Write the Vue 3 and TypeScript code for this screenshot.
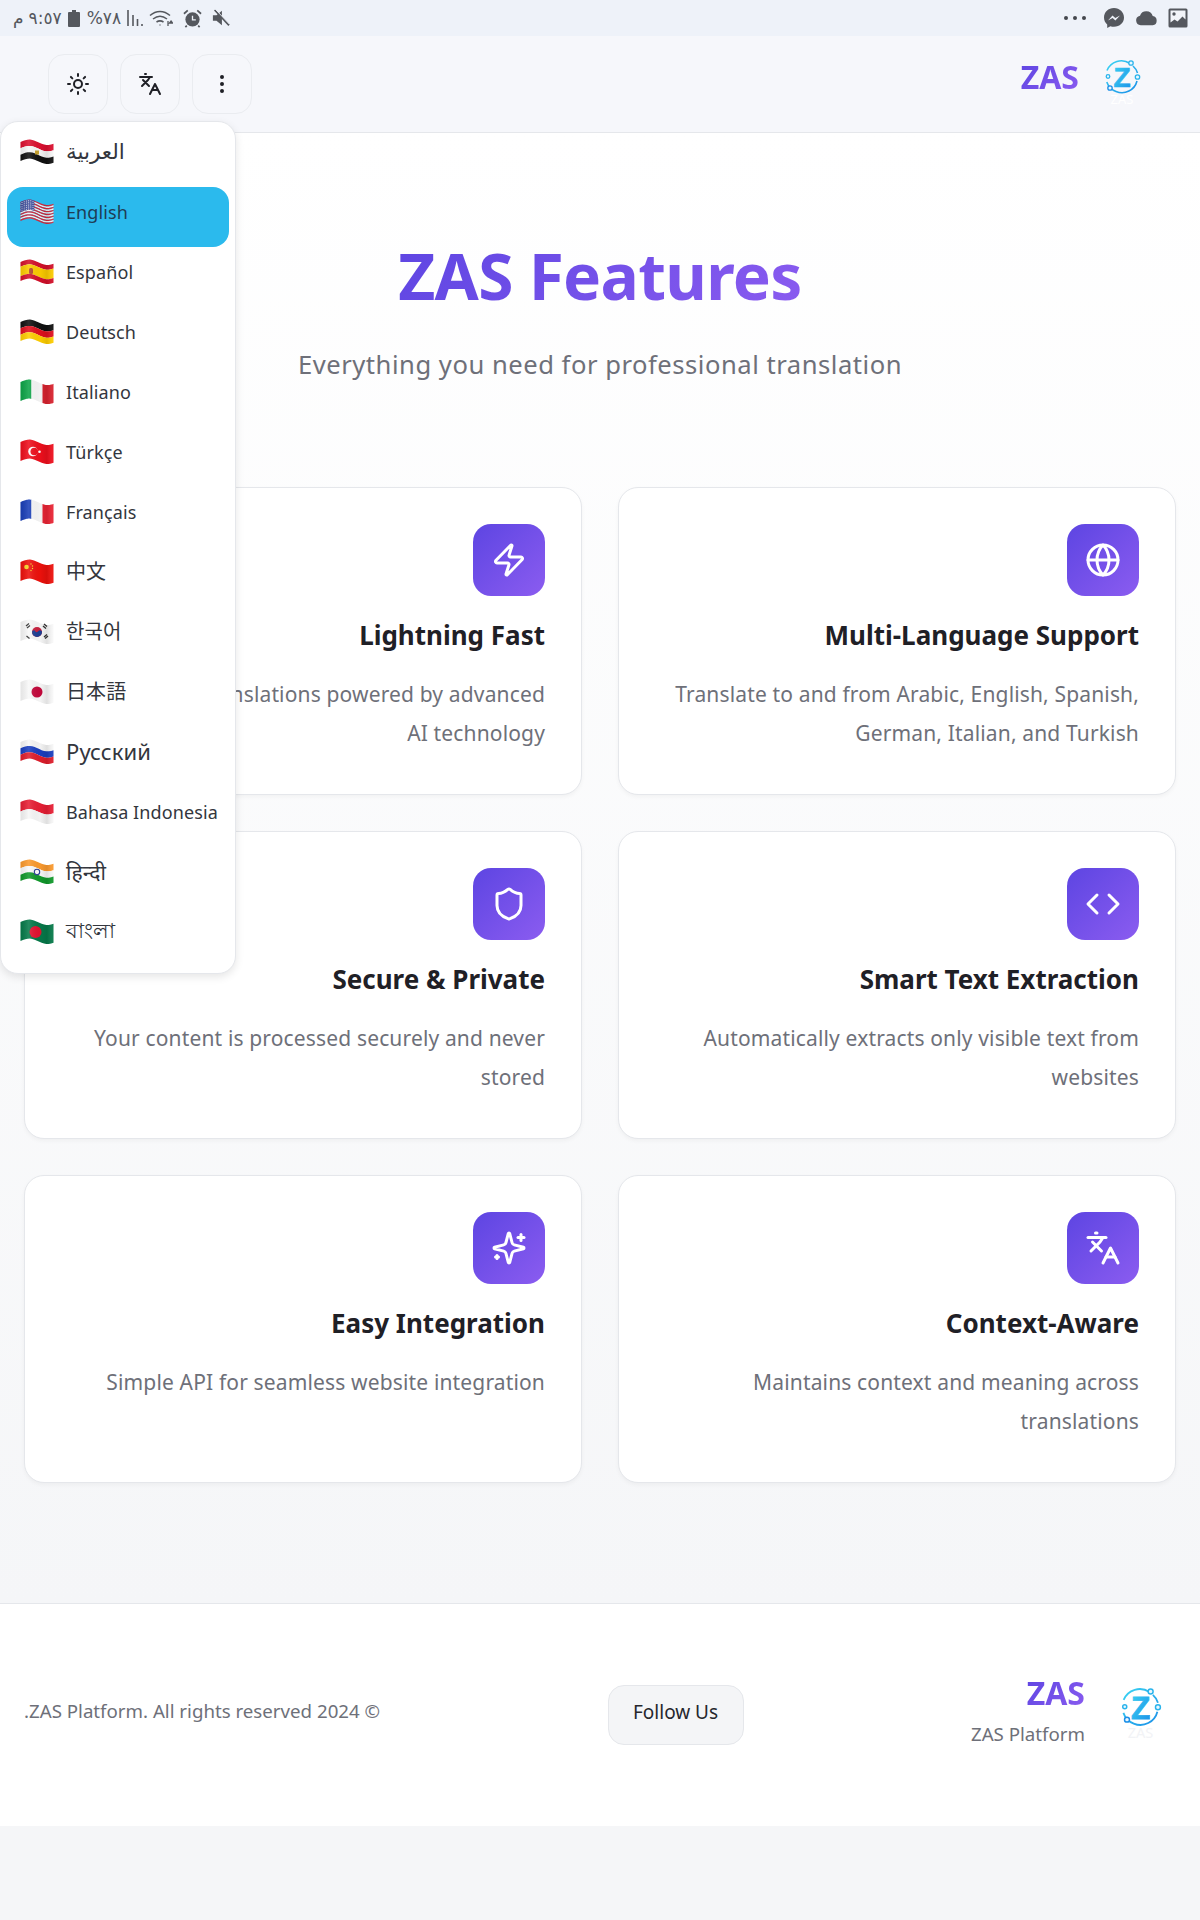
<template>
  <div class="page">
    <div class="status">
      <div class="status-left">
        <span class="st-txt st-m">م</span>
        <span class="st-txt st-time" dir="ltr">٩:٥٧</span>
        <svg class="st-batt" viewBox="0 0 12 17" width="12" height="17"><path d="M4 0h4v2h3a1 1 0 0 1 1 1v13a1 1 0 0 1-1 1H1a1 1 0 0 1-1-1V3a1 1 0 0 1 1-1h3z" fill="#55585e" /></svg>
        <span class="st-txt st-pct" dir="ltr">%٧٨</span>
        <svg class="st-sig" viewBox="0 0 18 18" width="18" height="18"><path d="M1 1v16M6 6v11M10.500 10v7M15 15v2" stroke="#55585e" stroke-width="1.600" fill="none" /></svg>
        <svg class="st-wifi" viewBox="0 0 24 18" width="24" height="18">
          <path d="M1 6.500C7 1 15 1 21 6.500M4 10c4.500-3.500 9.500-3.500 14 0M7.500 13c2.500-1.600 4.500-1.600 7 0" stroke="#55585e" stroke-width="1.500" fill="none" />
          <path d="M11 15.500v1M19 12v5M22 12l1.500 2h-3z" stroke="#55585e" stroke-width="1.300" fill="none" />
        </svg>
        <svg class="st-alarm" viewBox="0 0 20 20" width="19" height="19">
          <circle cx="10" cy="11" r="7.500" fill="#55585e" />
          <path d="M10 7v4.500h3.500" stroke="#eef2f9" stroke-width="1.400" fill="none" />
          <path d="M1 5l4-3.500M19 5l-4-3.500M4 17.500l-1.500 1.500M16 17.500l1.500 1.500" stroke="#55585e" stroke-width="1.800" fill="none" />
        </svg>
        <svg class="st-mute" viewBox="0 0 20 20" width="18" height="18">
          <path d="M1 7h4l6-5v16l-6-5H1z" fill="#55585e" />
          <path d="M3 1l16 17" stroke="#55585e" stroke-width="2.200" />
          <path d="M3.500 0l16 17" stroke="#eef2f9" stroke-width="1" />
        </svg>
      </div>
      <div class="status-right">
        <span class="st-dots"><i /><i /><i /></span>
        <svg viewBox="0 0 22 22" width="22" height="22">
          <path d="M11 1C5.300 1 1 5.100 1 10.500c0 2.900 1.200 5.300 3.200 7v3.500l3.200-1.800c1.100.4 2.300.6 3.600.6 5.700 0 10-4.100 10-9.300S16.700 1 11 1z" fill="#55585e" />
          <path d="M5 13.500l4.500-5 2.800 2.500 4.700-2.500-4.600 5-2.800-2.500z" fill="#eef2f9" />
        </svg>
        <svg viewBox="0 0 24 16" width="23" height="16"><path d="M6 15.500a5 5 0 0 1-.8-9.900A7 7 0 0 1 18.500 6a4.800 4.800 0 0 1 0 9.500z" fill="#55585e" /></svg>
        <svg viewBox="0 0 20 20" width="20" height="20">
          <rect x="0.500" y="0.500" width="19" height="19" rx="1.500" fill="#55585e" />
          <path d="M2.500 2.500h15v9l-3-3-5 5-3-2-4 3z" fill="#f2f4f8" />
          <circle cx="6" cy="6" r="1.700" fill="#55585e" />
        </svg>
      </div>
    </div>

    <header class="topbar">
      <div class="topbar-btns">
        <button type="button" class="icon-btn">
          <svg viewBox="0 0 24 24" class="lu lu-24">
            <circle cx="12" cy="12" r="4" />
            <path d="M12 2v2M12 20v2M4.930 4.930l1.410 1.410M17.660 17.660l1.410 1.410M2 12h2M20 12h2M6.340 17.660l-1.410 1.410M19.070 4.930l-1.410 1.410" />
          </svg>
        </button>
        <button type="button" class="icon-btn">
          <svg viewBox="0 0 24 24" class="lu lu-24">
            <path d="m5 8 6 6M4 14l6-6 2-3M2 5h12M7 2h1M22 22l-5-10-5 10M14 18h6" />
          </svg>
        </button>
        <button type="button" class="icon-btn">
          <svg viewBox="0 0 24 24" class="lu lu-24">
            <circle cx="12" cy="5" r="1" /><circle cx="12" cy="12" r="1" /><circle cx="12" cy="19" r="1" />
          </svg>
        </button>
      </div>
      <div class="brand">
        <span class="brand-name">ZAS</span>
        <svg viewBox="0 0 40 48" class="logo">
          <defs>
            <linearGradient id="logoGrad" x1="0" y1="0" x2="1" y2="1">
              <stop offset="0" stop-color="#3ad4f2" />
              <stop offset="1" stop-color="#1b8fe8" />
            </linearGradient>
          </defs>
          <path d="M28 4.500A15.500 15.500 0 0 0 5 11.500M4.800 23A15.500 15.500 0 0 0 14 32.500M14 32.500A15.500 15.500 0 0 0 35 22M35.500 14A15.500 15.500 0 0 0 31 7" fill="none" stroke="url(#logoGrad)" stroke-width="1.600" />
          <circle cx="29" cy="4" r="2.200" fill="#eaf7fe" stroke="#2bb4ec" stroke-width="1.300" />
          <circle cx="35.500" cy="18" r="2.200" fill="#eaf7fe" stroke="#2bb4ec" stroke-width="1.300" />
          <circle cx="6" cy="17.500" r="1.800" fill="#eaf7fe" stroke="#2bb4ec" stroke-width="1.300" />
          <circle cx="8" cy="29" r="2.200" fill="#eaf7fe" stroke="#1b8fe8" stroke-width="1.300" />
          <text x="20" y="28" text-anchor="middle" class="logo-z">Z</text>
          <text x="20" y="45" text-anchor="middle" class="logo-sub">ZAS</text>
        </svg>
      </div>
    </header>

    <ul class="lang-menu">
      <li v-for="f in flags" :key="f.code" class="lang-item" :class="{ 'lang-item--active': f.code === 'us' }">
        <svg viewBox="0 0 34 26" width="34" height="26" class="flag">
          <polygon v-for="(b, i) in f.bands" :key="i" :points="band(b[0], b[1], b[2], b[3])" :fill="b[4]" />
          <template v-if="f.code === 'eg'">
            <rect x="15" y="11.500" width="4" height="4" fill="#c8a22c" />
          </template>
          <template v-else-if="f.code === 'us'">
            <polygon :points="band(0, 0.42, 0, 0.54)" fill="#3f4f9c" />
            <circle v-for="d in usDots" :key="d[0] + '-' + d[1]" :cx="d[0]" :cy="d[1]" r="0.500" fill="#fff" />
          </template>
          <template v-else-if="f.code === 'es'">
            <rect x="9" y="9" width="4" height="6" rx="1.500" fill="#b5482b" />
          </template>
          <template v-else-if="f.code === 'tr'">
            <circle cx="13" cy="12.500" r="4.800" fill="#fff" />
            <circle cx="14.300" cy="12.500" r="3.800" fill="#ef0f1d" />
            <circle cx="19.500" cy="12.800" r="1.300" fill="#fff" />
          </template>
          <template v-else-if="f.code === 'cn'">
            <circle cx="6.500" cy="8" r="2.300" fill="#f8d626" />
            <circle cx="11" cy="5" r="0.700" fill="#f8d626" />
            <circle cx="12.500" cy="7" r="0.700" fill="#f8d626" />
            <circle cx="12.500" cy="9.500" r="0.700" fill="#f8d626" />
            <circle cx="11" cy="11.500" r="0.700" fill="#f8d626" />
          </template>
          <template v-else-if="f.code === 'kr'">
            <circle cx="17" cy="13" r="5" fill="#c9213f" />
            <path d="M12 13a5 5 0 0 0 10 0c0-1.500-2.500-2.500-3.500-1s-3 1.500-3.500 0-3-.5-3 1z" fill="#1c3f94" />
            <path d="M6 7l3-2.500M7 9l3-2.500M24 5l3 2.500M23 7l3 2.500M6.500 17l3 2.500M25 19.500l3-2.500M24 18l3-2.500" stroke="#333" stroke-width="1.300" />
          </template>
          <template v-else-if="f.code === 'jp'">
            <circle cx="17" cy="13" r="5.500" fill="#c4083b" />
          </template>
          <template v-else-if="f.code === 'in'">
            <circle cx="17" cy="13" r="2.700" fill="#fff" stroke="#2a3f96" stroke-width="1.100" />
          </template>
          <template v-else-if="f.code === 'bd'">
            <circle cx="15.500" cy="13" r="6" fill="#e3112f" />
          </template>
          <polygon :points="band(0, 1, 0, 1)" fill="url(#flagShade)" />
          <defs>
            <linearGradient id="flagShade" x1="0" y1="0" x2="1" y2="0">
              <stop offset="0" stop-color="#000" stop-opacity="0.080" />
              <stop offset="0.250" stop-color="#fff" stop-opacity="0.120" />
              <stop offset="0.600" stop-color="#000" stop-opacity="0.020" />
              <stop offset="0.800" stop-color="#000" stop-opacity="0.100" />
              <stop offset="1" stop-color="#fff" stop-opacity="0.060" />
            </linearGradient>
          </defs>
        </svg>
        <span class="lang-label" :class="f.cls">{{ f.label }}</span>
      </li>
    </ul>

    <main class="main">
      <section class="hero">
        <h1 class="hero-title">ZAS Features</h1>
        <p class="hero-sub">Everything you need for professional translation</p>
      </section>

      <section class="grid">
        <article v-for="c in cards" :key="c.title" class="card">
          <div class="card-icon">
            <svg viewBox="0 0 24 24" class="lu lu-36">
              <path v-for="p in c.paths" :key="p" :d="p" />
              <circle v-if="c.circle" cx="12" cy="12" r="10" />
            </svg>
          </div>
          <h3 class="card-title">{{ c.title }}</h3>
          <p class="card-desc">{{ c.desc }}</p>
        </article>
      </section>
    </main>

    <footer class="footer">
      <p class="copy">.ZAS Platform. All rights reserved 2024 ©</p>
      <button type="button" class="follow">Follow Us</button>
      <div class="foot-brand">
        <div class="foot-names">
          <span class="foot-name">ZAS</span>
          <span class="foot-sub">ZAS Platform</span>
        </div>
        <svg viewBox="0 0 40 48" class="logo logo--foot">
          <path d="M28 4.500A15.500 15.500 0 0 0 5 11.500M4.800 23A15.500 15.500 0 0 0 14 32.500M14 32.500A15.500 15.500 0 0 0 35 22M35.500 14A15.500 15.500 0 0 0 31 7" fill="none" stroke="url(#logoGrad)" stroke-width="1.600" />
          <circle cx="29" cy="4" r="2.200" fill="#eaf7fe" stroke="#2bb4ec" stroke-width="1.300" />
          <circle cx="35.500" cy="18" r="2.200" fill="#eaf7fe" stroke="#2bb4ec" stroke-width="1.300" />
          <circle cx="6" cy="17.500" r="1.800" fill="#eaf7fe" stroke="#2bb4ec" stroke-width="1.300" />
          <circle cx="8" cy="29" r="2.200" fill="#eaf7fe" stroke="#1b8fe8" stroke-width="1.300" />
          <text x="20" y="28" text-anchor="middle" class="logo-z">Z</text>
          <text x="20" y="45" text-anchor="middle" class="logo-sub logo-sub--foot">ZAS</text>
        </svg>
      </div>
    </footer>
  </div>
</template>

<script setup lang="ts">
type Band = [number, number, number, number, string]

interface Flag {
  code: string
  label: string
  bands: Band[]
  cls?: string
}

// the flags wave a bit, so every stripe is sampled along the same curve
function edgeY(t: number, v: number) {
  const wave = -2.6 * Math.sin(2 * Math.PI * 0.92 * t)
  return 3 + 0.6 * t + 19 * v + wave
}

function band(t0: number, t1: number, v0: number, v1: number) {
  const pts: string[] = []
  const steps = 14
  for (let i = 0; i <= steps; i++) {
    const t = t0 + ((t1 - t0) * i) / steps
    pts.push(`${(0.5 + 33 * t).toFixed(2)},${edgeY(t, v0).toFixed(2)}`)
  }
  for (let i = steps; i >= 0; i--) {
    const t = t0 + ((t1 - t0) * i) / steps
    pts.push(`${(0.5 + 33 * t).toFixed(2)},${edgeY(t, v1).toFixed(2)}`)
  }
  return pts.join(' ')
}

const h3 = (a: string, b: string, c: string): Band[] => [
  [0, 1, 0, 1 / 3, a],
  [0, 1, 1 / 3, 2 / 3, b],
  [0, 1, 2 / 3, 1, c],
]
const v3 = (a: string, b: string, c: string): Band[] => [
  [0, 1 / 3, 0, 1, a],
  [1 / 3, 2 / 3, 0, 1, b],
  [2 / 3, 1, 0, 1, c],
]

const usStripes: Band[] = Array.from({ length: 13 }, (_, i) => [
  0,
  1,
  i / 13,
  (i + 1) / 13,
  i % 2 ? '#f4f4f6' : '#d42a3e',
])

const usDots: number[][] = []
for (let x = 2; x < 14; x += 2.2) {
  for (let v = 0.06; v < 0.52; v += 0.11) {
    usDots.push([x, edgeY((x - 0.5) / 33, v)])
  }
}

const flags: Flag[] = [
  { code: 'eg', label: 'العربية', bands: h3('#dc1030', '#f7f7f7', '#111111'), cls: 'lbl-ar' },
  { code: 'us', label: 'English', bands: usStripes },
  { code: 'es', label: 'Español', bands: [[0, 1, 0, 0.25, '#d4102a'], [0, 1, 0.25, 0.75, '#fccb00'], [0, 1, 0.75, 1, '#d4102a']] },
  { code: 'de', label: 'Deutsch', bands: h3('#111111', '#e00f1e', '#ffce00') },
  { code: 'it', label: 'Italiano', bands: v3('#0ea548', '#f7f7f7', '#d9232f') },
  { code: 'tr', label: 'Türkçe', bands: [[0, 1, 0, 1, '#ef0f1d']] },
  { code: 'fr', label: 'Français', bands: v3('#1a3fb8', '#f7f7f7', '#ea2535') },
  { code: 'cn', label: '中文', bands: [[0, 1, 0, 1, '#ee110c']], cls: 'lbl-cjk' },
  { code: 'kr', label: '한국어', bands: [[0, 1, 0, 1, '#f9f9f9']], cls: 'lbl-cjk' },
  { code: 'jp', label: '日本語', bands: [[0, 1, 0, 1, '#f9f9f9']], cls: 'lbl-cjk' },
  { code: 'ru', label: 'Русский', bands: h3('#f7f7f7', '#1a3fc0', '#e01e2c'), cls: 'lbl-ru' },
  { code: 'id', label: 'Bahasa Indonesia', bands: [[0, 1, 0, 0.5, '#e81f35'], [0, 1, 0.5, 1, '#f7f7f7']] },
  { code: 'in', label: 'हिन्दी', bands: h3('#fb9a2e', '#f9f9f9', '#119a2c'), cls: 'lbl-in' },
  { code: 'bd', label: 'বাংলা', bands: [[0, 1, 0, 1, '#067a4a']], cls: 'lbl-in' },
]

const languagesPaths = ['m5 8 6 6', 'm4 14 6-6 2-3', 'M2 5h12', 'M7 2h1', 'm22 22-5-10-5 10', 'M14 18h6']

const cards = [
  {
    title: 'Lightning Fast',
    desc: 'Instant translations powered by advanced\nAI technology',
    paths: ['M4 14a1 1 0 0 1-.78-1.630l9.900-10.200a.5.5 0 0 1 .86.46l-1.920 6.020A1 1 0 0 0 13 10h7a1 1 0 0 1 .78 1.630l-9.900 10.200a.5.5 0 0 1-.86-.46l1.920-6.020A1 1 0 0 0 11 14z'],
  },
  {
    title: 'Multi-Language Support',
    desc: 'Translate to and from Arabic, English, Spanish, German, Italian, and Turkish',
    paths: ['M12 2a14.500 14.500 0 0 0 0 20 14.500 14.500 0 0 0 0-20', 'M2 12h20'],
    circle: true,
  },
  {
    title: 'Secure & Private',
    desc: 'Your content is processed securely and never stored',
    paths: ['M20 13c0 5-3.500 7.500-7.660 8.950a1 1 0 0 1-.67-.01C7.500 20.500 4 18 4 13V6a1 1 0 0 1 1-1c2 0 4.500-1.200 6.240-2.720a1.170 1.170 0 0 1 1.520 0C14.510 3.810 17 5 19 5a1 1 0 0 1 1 1z'],
  },
  {
    title: 'Smart Text Extraction',
    desc: 'Automatically extracts only visible text from websites',
    paths: ['m16 18 6-6-6-6', 'm8 6-6 6 6 6'],
  },
  {
    title: 'Easy Integration',
    desc: 'Simple API for seamless website integration',
    paths: [
      'M9.937 15.500A2 2 0 0 0 8.500 14.063l-6.135-1.582a.5.5 0 0 1 0-.962L8.500 9.936A2 2 0 0 0 9.937 8.500l1.582-6.135a.5.5 0 0 1 .963 0L14.063 8.500A2 2 0 0 0 15.500 9.937l6.135 1.581a.5.5 0 0 1 0 .964L15.500 14.063a2 2 0 0 0-1.437 1.437l-1.582 6.135a.5.5 0 0 1-.963 0z',
      'M20 3v4',
      'M22 5h-4',
      'M4 17v2',
      'M5 18H3',
    ],
  },
  {
    title: 'Context-Aware',
    desc: 'Maintains context and meaning across translations',
    paths: languagesPaths,
  },
]
</script>

<style scoped>
.page {
  position: relative;
  font-family: 'Noto Sans', 'DejaVu Sans', sans-serif;
  color: #1f2026;
}

.status {
  height: 36px;
  background: #eef2f9;
  display: flex;
  align-items: center;
  justify-content: space-between;
  padding: 0 12px 0 13px;
}

.status-left,
.status-right {
  display: flex;
  align-items: center;
}

.status-right {
  gap: 10px;
}

.st-txt {
  font-family: 'DejaVu Sans', sans-serif;
  font-size: 17px;
  color: #55585e;
  line-height: 1;
}

.st-time {
  margin-left: 5px;
}

.st-batt {
  margin-left: 6px;
}

.st-pct {
  margin-left: 7px;
}

.st-sig {
  margin-left: 6px;
}

.st-wifi {
  margin-left: 4px;
}

.st-alarm {
  margin-left: 10px;
}

.st-mute {
  margin-left: 10px;
}

.st-dots {
  display: flex;
  gap: 5px;
  margin-right: 7px;
}

.st-dots i {
  width: 4px;
  height: 4px;
  border-radius: 50%;
  background: #44474d;
}

.topbar {
  height: 97px;
  box-sizing: border-box;
  background: #f6f7fb;
  border-bottom: 1px solid #e5e7eb;
  display: flex;
  align-items: flex-start;
  justify-content: space-between;
  padding: 18px 58px 0 48px;
}

.topbar-btns {
  display: flex;
  gap: 12px;
}

.icon-btn {
  width: 60px;
  height: 60px;
  border: 1px solid #eaecf0;
  border-radius: 16px;
  background: transparent;
  color: #1f2026;
  display: flex;
  align-items: center;
  justify-content: center;
  padding: 0;
}

.lu {
  fill: none;
  stroke: currentColor;
  stroke-width: 2;
  stroke-linecap: round;
  stroke-linejoin: round;
}

.lu-24 {
  width: 24px;
  height: 24px;
}

.lu-36 {
  width: 36px;
  height: 36px;
  color: #fff;
}

.brand {
  display: flex;
  align-items: flex-start;
  gap: 23px;
}

.brand-name,
.foot-name {
  font-weight: 700;
  background: linear-gradient(135deg, #5d45e2, #8b5cf0);
  -webkit-background-clip: text;
  background-clip: text;
  color: transparent;
}

.brand-name {
  font-size: 32px;
  line-height: 40px;
  margin-top: 3px;
}

.logo {
  width: 40px;
  height: 48px;
  margin-top: 5px;
}

.logo--foot {
  width: 45px;
  height: 54px;
  margin: 0 0 2px;
}

.logo-z {
  font-family: 'Liberation Sans', sans-serif;
  font-weight: 700;
  font-size: 28px;
  fill: url(#logoGrad);
  stroke: url(#logoGrad);
  stroke-width: 0.700px;
}

.logo-sub {
  font-family: 'Noto Sans', sans-serif;
  font-size: 13px;
  fill: #ffffff;
}

.logo-sub--foot {
  fill: #f2f3f6;
}

.lang-menu {
  position: absolute;
  left: 0;
  top: 121px;
  width: 236px;
  box-sizing: border-box;
  height: 853px;
  margin: 0;
  padding: 5px 6px;
  list-style: none;
  background: #fff;
  border: 1px solid #e5e7eb;
  border-radius: 18px;
  box-shadow: 0 3px 8px rgba(0, 0, 0, 0.1);
  z-index: 5;
}

.lang-item {
  height: 60px;
  box-sizing: border-box;
  display: flex;
  align-items: center;
  gap: 12px;
  padding: 0 0 10px 13px;
  border-radius: 16px;
  font-size: 18px;
  letter-spacing: 0.1px;
  color: #33363d;
}

.lang-item--active {
  background: #2bbaed;
  color: #1f3d55;
}

.flag {
  flex-shrink: 0;
}

.lang-label {
  white-space: nowrap;
}

.lbl-ar {
  font-size: 21.500px;
  margin-bottom: 3px;
}

.lbl-cjk {
  font-family: 'Noto Sans CJK JP', 'Noto Sans', sans-serif;
  font-size: 20px;
  margin-bottom: 3px;
}

.lbl-ru {
  font-size: 22px;
  margin-bottom: 2px;
}

.lbl-in {
  font-size: 21px;
}

.main {
  background: linear-gradient(180deg, #ffffff 0%, #f5f6f8 100%);
  padding: 0 24px 120px;
}

.hero {
  text-align: center;
  height: 354px;
  padding-top: 99px;
  box-sizing: border-box;
}

.hero-title {
  margin: 0;
  font-size: 64px;
  line-height: 88px;
  font-weight: 700;
  letter-spacing: -0.7px;
  background: linear-gradient(135deg, #5d45e2, #8b5cf0);
  -webkit-background-clip: text;
  background-clip: text;
  color: transparent;
  width: fit-content;
  margin-inline: auto;
}

.hero-sub {
  margin: 22px 0 0;
  font-size: 25.600px;
  line-height: 46px;
  letter-spacing: 0.52px;
  color: #6e7079;
}

.grid {
  display: grid;
  grid-template-columns: 1fr 1fr;
  gap: 36px;
}

.card {
  height: 308px;
  box-sizing: border-box;
  background: #fff;
  border: 1px solid #e5e7eb;
  border-radius: 20px;
  box-shadow: 0 2px 4px rgba(0, 0, 0, 0.04);
  padding: 36px;
  display: flex;
  flex-direction: column;
  align-items: flex-end;
  text-align: right;
}

.card-icon {
  width: 72px;
  height: 72px;
  border-radius: 18px;
  background: linear-gradient(135deg, #5d45e2, #8b5cf0);
  display: flex;
  align-items: center;
  justify-content: center;
}

.card-title {
  margin: 21px 0 0;
  font-size: 26px;
  line-height: 36px;
  font-weight: 700;
  color: #1f2026;
}

.card-desc {
  margin: 22px 0 0;
  font-size: 21px;
  line-height: 39px;
  letter-spacing: 0.15px;
  white-space: pre-line;
  color: #6e7079;
}

.footer {
  height: 223px;
  box-sizing: border-box;
  background: #fff;
  border-top: 1px solid #e5e7eb;
  display: flex;
  align-items: center;
  justify-content: space-between;
  padding: 0 37px 0 24px;
}

.copy {
  margin: 0 0 10px;
  font-size: 18.700px;
  color: #6e7079;
}

.follow {
  width: 136px;
  height: 60px;
  background: #f4f5f7;
  border: 1px solid #e5e7eb;
  border-radius: 16px;
  font-family: inherit;
  font-size: 19px;
  color: #26272d;
  padding: 0 0 6px;
}

.foot-brand {
  display: flex;
  align-items: center;
  gap: 33px;
}

.foot-names {
  display: flex;
  flex-direction: column;
  align-items: flex-end;
  gap: 8px;
  margin-bottom: 10px;
}

.foot-name {
  font-size: 32px;
  line-height: 40px;
}

.foot-sub {
  font-size: 18.700px;
  line-height: 26px;
  color: #6e7079;
}
</style>

<style>
html,
body {
  background: #f5f6f8;
}
</style>
